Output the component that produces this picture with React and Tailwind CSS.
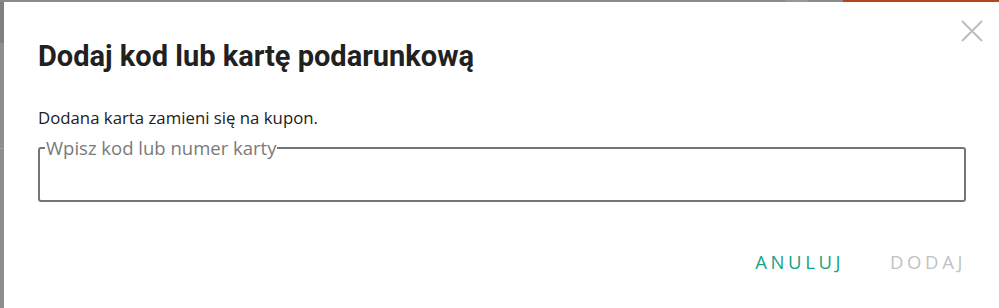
import React from 'react';

function CloseIcon() {
  return (
    <svg width="22" height="22" viewBox="0 0 22 22" fill="none" stroke="#bdbdbd" strokeWidth="2">
      <path d="M1 1 L21 21 M21 1 L1 21" />
    </svg>
  );
}

export default function App() {
  return (
    <div className="w-[999px] h-[308px] bg-[#8e8e8e] flex flex-col overflow-hidden">
      {/* page behind the overlay */}
      <div className="h-[2px] flex shrink-0">
        <div className="w-[785px] bg-[#8a8a8a]" />
        <div className="w-[23px] bg-[#979797]" />
        <div className="w-[35px] bg-[#8a8a8a]" />
        <div className="flex-1 bg-[#b3441c]" />
      </div>
      <div className="flex flex-1">
        <div className="w-[4px] flex flex-col shrink-0">
          <div className="h-[41px] bg-[#808080]" />
          <div className="h-[105px] bg-[#8e8e8e]" />
          <div className="h-[1px] bg-[#a0a0a0]" />
          <div className="flex-1 bg-[#8e8e8e]" />
        </div>

        <div className="flex-1 bg-white flex flex-col pl-[34px] pr-[33px] font-['Open_Sans',sans-serif]">
          <div className="flex items-start justify-between pt-[18px]">
            <h2 className="mt-[20px] text-[29px] leading-[32px] font-bold text-[#212121] font-['Roboto',sans-serif]">
              Dodaj kod lub kartę podarunkową
            </h2>
            <button className="mr-[-17px]">
              <CloseIcon />
            </button>
          </div>

          <p className="mt-[35px] text-[16.8px] leading-[22px] text-[#212121]">
            Dodana karta zamieni się na kupon.
          </p>

          <fieldset className="mt-[9px] h-[64px] border-2 border-[#757575] rounded-[3px] px-[5px]">
            <legend className="px-[1px] text-[18.5px] leading-[20px] text-[#7a7a7a]">
              Wpisz kod lub numer karty
            </legend>
          </fieldset>

          <div className="flex justify-end gap-[46px] mt-[49px] text-[18.5px] tracking-[3.6px] leading-[22px]">
            <button className="text-[#14a38a]">ANULUJ</button>
            <button className="text-[#c2c2c2]">DODAJ</button>
          </div>
        </div>
      </div>
    </div>
  );
}
